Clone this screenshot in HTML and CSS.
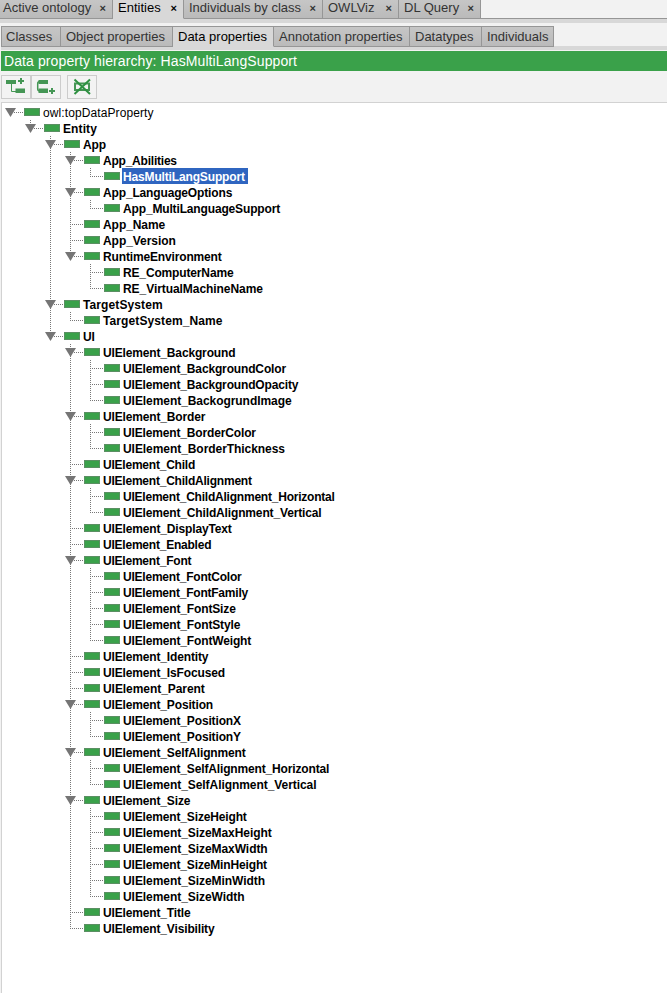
FILE: index.html
```html
<!DOCTYPE html>
<html lang="en">
<head>
<meta charset="utf-8">
<title>Data properties</title>
<link rel="stylesheet" href="styles.css">
</head>
<body>
<nav class="tabs main-tabs">
  <div class="tab t-onto"><span>Active ontology</span><b class="close">×</b></div>
  <div class="tab t-ent selected"><span>Entities</span><b class="close">×</b></div>
  <div class="tab t-ind"><span>Individuals by class</span><b class="close">×</b></div>
  <div class="tab t-viz"><span>OWLViz</span><b class="close">×</b></div>
  <div class="tab t-dl"><span>DL Query</span><b class="close">×</b></div>
</nav>
<nav class="tabs sub-tabs">
  <div class="tab s-cls"><span>Classes</span></div>
  <div class="tab s-obj"><span>Object properties</span></div>
  <div class="tab s-dat selected"><span>Data properties</span></div>
  <div class="tab s-ann"><span>Annotation properties</span></div>
  <div class="tab s-typ"><span>Datatypes</span></div>
  <div class="tab s-idv"><span>Individuals</span></div>
</nav>
<h1 class="title"><span>Data property hierarchy: HasMultiLangSupport</span></h1>
<div class="toolbar">
  <button class="tool" aria-label="Add sub property"><svg width="28" height="22" viewBox="0 0 28 22"><path fill="#459655" d="M4 4h10v4H4zM13.500 12.500H23v4.500h-9.500zM18 2h2v6h-2zM16 4h6v2h-6z"/><path fill="none" stroke="#459655" d="M9.500 8v7.500H14"/></svg></button>
  <button class="tool" aria-label="Add sibling property"><svg width="28" height="22" viewBox="0 0 28 22"><path fill="#459655" d="M6.500 4h9.500v4H6.500zM6.500 12.500h9.500v4.500H6.500zM19 12h2v6h-2zM17 14h6v2h-6z"/><path fill="none" stroke="#459655" stroke-width="1.500" d="M8 5.500Q5.700 5.500 5.700 7.500V13Q5.700 15 8 15"/></svg></button>
  <button class="tool gap" aria-label="Delete property"><svg width="28" height="22" viewBox="0 0 28 22"><path fill="none" stroke="#459655" stroke-width="2" d="M7 7.500h14v6.500H7z"/><path fill="none" stroke="#2f9142" stroke-width="2" d="M6.500 3.500L22 18M22 3.500L6.500 18"/></svg></button>
</div>
<main class="panel">
<ul class="tree root">
<li><div class="row open"><i class="chip"></i><span class="name plain">owl:topDataProperty</span></div>
<ul><li><div class="row open"><i class="chip"></i><span class="name wide">Entity</span></div>
<ul>
<li><div class="row open"><i class="chip"></i><span class="name">App</span></div>
  <ul>
  <li><div class="row open"><i class="chip"></i><span class="name tight">App_Abilities</span></div>
    <ul><li><div class="row"><i class="chip"></i><span class="name active">HasMultiLangSupport</span></div></li></ul></li>
  <li><div class="row open"><i class="chip"></i><span class="name">App_LanguageOptions</span></div>
    <ul><li><div class="row"><i class="chip"></i><span class="name">App_MultiLanguageSupport</span></div></li></ul></li>
  <li><div class="row"><i class="chip"></i><span class="name loose">App_Name</span></div></li>
  <li><div class="row"><i class="chip"></i><span class="name loose">App_Version</span></div></li>
  <li><div class="row open"><i class="chip"></i><span class="name">RuntimeEnvironment</span></div>
    <ul>
    <li><div class="row"><i class="chip"></i><span class="name">RE_ComputerName</span></div></li>
    <li><div class="row"><i class="chip"></i><span class="name loose">RE_VirtualMachineName</span></div></li>
    </ul></li>
  </ul></li>
<li><div class="row open"><i class="chip"></i><span class="name wide">TargetSystem</span></div>
  <ul><li><div class="row"><i class="chip"></i><span class="name wide">TargetSystem_Name</span></div></li></ul></li>
<li><div class="row open"><i class="chip"></i><span class="name">UI</span></div>
  <ul>
  <li><div class="row open"><i class="chip"></i><span class="name">UIElement_Background</span></div>
    <ul>
    <li><div class="row"><i class="chip"></i><span class="name">UIElement_BackgroundColor</span></div></li>
    <li><div class="row"><i class="chip"></i><span class="name">UIElement_BackgroundOpacity</span></div></li>
    <li><div class="row"><i class="chip"></i><span class="name loose">UIElement_BackogrundImage</span></div></li>
    </ul></li>
  <li><div class="row open"><i class="chip"></i><span class="name">UIElement_Border</span></div>
    <ul>
    <li><div class="row"><i class="chip"></i><span class="name">UIElement_BorderColor</span></div></li>
    <li><div class="row"><i class="chip"></i><span class="name loose">UIElement_BorderThickness</span></div></li>
    </ul></li>
  <li><div class="row"><i class="chip"></i><span class="name tight">UIElement_Child</span></div></li>
  <li><div class="row open"><i class="chip"></i><span class="name tight">UIElement_ChildAlignment</span></div>
    <ul>
    <li><div class="row"><i class="chip"></i><span class="name tight">UIElement_ChildAlignment_Horizontal</span></div></li>
    <li><div class="row"><i class="chip"></i><span class="name">UIElement_ChildAlignment_Vertical</span></div></li>
    </ul></li>
  <li><div class="row"><i class="chip"></i><span class="name">UIElement_DisplayText</span></div></li>
  <li><div class="row"><i class="chip"></i><span class="name tight">UIElement_Enabled</span></div></li>
  <li><div class="row open"><i class="chip"></i><span class="name tight">UIElement_Font</span></div>
    <ul>
    <li><div class="row"><i class="chip"></i><span class="name tight">UIElement_FontColor</span></div></li>
    <li><div class="row"><i class="chip"></i><span class="name tight">UIElement_FontFamily</span></div></li>
    <li><div class="row"><i class="chip"></i><span class="name">UIElement_FontSize</span></div></li>
    <li><div class="row"><i class="chip"></i><span class="name">UIElement_FontStyle</span></div></li>
    <li><div class="row"><i class="chip"></i><span class="name">UIElement_FontWeight</span></div></li>
    </ul></li>
  <li><div class="row"><i class="chip"></i><span class="name">UIElement_Identity</span></div></li>
  <li><div class="row"><i class="chip"></i><span class="name">UIElement_IsFocused</span></div></li>
  <li><div class="row"><i class="chip"></i><span class="name loose">UIElement_Parent</span></div></li>
  <li><div class="row open"><i class="chip"></i><span class="name">UIElement_Position</span></div>
    <ul>
    <li><div class="row"><i class="chip"></i><span class="name">UIElement_PositionX</span></div></li>
    <li><div class="row"><i class="chip"></i><span class="name">UIElement_PositionY</span></div></li>
    </ul></li>
  <li><div class="row open"><i class="chip"></i><span class="name">UIElement_SelfAlignment</span></div>
    <ul>
    <li><div class="row"><i class="chip"></i><span class="name">UIElement_SelfAlignment_Horizontal</span></div></li>
    <li><div class="row"><i class="chip"></i><span class="name loose">UIElement_SelfAlignment_Vertical</span></div></li>
    </ul></li>
  <li><div class="row open"><i class="chip"></i><span class="name">UIElement_Size</span></div>
    <ul>
    <li><div class="row"><i class="chip"></i><span class="name">UIElement_SizeHeight</span></div></li>
    <li><div class="row"><i class="chip"></i><span class="name loose">UIElement_SizeMaxHeight</span></div></li>
    <li><div class="row"><i class="chip"></i><span class="name loose">UIElement_SizeMaxWidth</span></div></li>
    <li><div class="row"><i class="chip"></i><span class="name">UIElement_SizeMinHeight</span></div></li>
    <li><div class="row"><i class="chip"></i><span class="name loose">UIElement_SizeMinWidth</span></div></li>
    <li><div class="row"><i class="chip"></i><span class="name loose">UIElement_SizeWidth</span></div></li>
    </ul></li>
  <li><div class="row"><i class="chip"></i><span class="name">UIElement_Title</span></div></li>
  <li><div class="row"><i class="chip"></i><span class="name">UIElement_Visibility</span></div></li>
  </ul></li>
</ul></li></ul></li>
</ul>
</main>
</body>
</html>
```
FILE: styles.css
```css
* { box-sizing: border-box; }
body {
  margin: 0;
  height: 993px;
  display: flex;
  flex-direction: column;
  overflow: hidden;
  background: #f2f2f2;
  font: 12px/16px "Liberation Sans", Arial, sans-serif;
  color: #000;
}
.tabs { display: flex; flex: none; }
.main-tabs { height: 23px; border-bottom: 4px solid #d8d8d8; background: linear-gradient(#969696, #969696) 0 18px / 100% 1px no-repeat; }
.sub-tabs { height: 24px; margin: 3px 0 0 1px; border-bottom: 4px solid #d8d8d8; background: linear-gradient(#969696, #969696) 0 20px / 100% 1px no-repeat; }
.tab {
  display: flex;
  align-items: center;
  flex: none;
  background: linear-gradient(#c6c6c6, #bababa);
  border-right: 1px solid #969696;
  border-bottom: 1px solid #969696;
  color: #333;
  font-size: 13px;
  white-space: nowrap;
}
.main-tabs .tab { height: 19px; padding: 0 6px 2px 5px; justify-content: space-between; }
.sub-tabs .tab { height: 21px; padding-left: 5px; border-top: 1px solid #969696; }
.sub-tabs .tab:first-child { border-left: 1px solid #969696; padding-left: 4px; }
.tab.selected { background: #d8d8d8; border-bottom-color: #d8d8d8; color: #000; }
.close { font-size: 11px; }
.main-tabs .t-onto { width: 113px; padding-left: 3px; }
.t-ent { width: 71px; }
.t-ind { width: 139px; }
.t-viz { width: 76px; }
.t-dl { width: 82px; }
.s-cls { width: 60px; }
.s-obj { width: 112px; }
.s-dat { width: 101px; }
.s-ann { width: 136px; }
.s-typ { width: 72px; }
.s-idv { width: 72px; }
.title {
  flex: none;
  height: 20px;
  margin: 1px 0 0 1px;
  padding-left: 3px;
  background: #3aa14a;
  color: #fff;
  font-size: 14px;
  font-weight: 400;
  line-height: 20px;
  letter-spacing: .1px;
}
.toolbar { flex: none; display: flex; height: 31px; padding: 4px 0 0 1px; }
.tool { width: 30px; height: 24px; padding: 0; border: 1px solid #ccc; background: #f3f3f3; }
.tool svg { display: block; }
.tool.gap { margin-left: 6px; }
.panel { flex: 1; margin-left: 1px; padding-top: 1px; background: #fff; border-top: 1px solid #d2d2d2; border-left: 1px solid #d2d2d2; }
.tree { margin-left: -2px; }
ul { list-style: none; margin: 0; padding: 0; }
ul ul { margin-left: 20px; }
li { position: relative; }
/* vertical guide joining siblings */
ul ul > li::before {
  content: "";
  position: absolute;
  left: 10px;
  top: 0;
  width: 1px;
  height: 100%;
  background: repeating-linear-gradient(#777 0 1px, transparent 1px 2px);
}
ul ul > li:last-child::before { height: 9px; }
.row { position: relative; display: flex; height: 16px; padding-left: 24px; }
.row::before {
  content: "";
  position: absolute;
  left: 10px;
  top: 8px;
  width: 13px;
  height: 1px;
  background: repeating-linear-gradient(90deg, #777 0 1px, transparent 1px 2px);
}
.row.open::after {
  content: "";
  position: absolute;
  left: 5px;
  top: 4px;
  width: 11px;
  height: 9px;
  background: #757575;
  clip-path: polygon(0 0, 100% 0, 50% 100%);
}
.chip { width: 16px; height: 8px; margin: 4px 2px 0 0; background: #3aa14a; border: 1px solid #5b8f63; }
.name { padding: 0 3px 0 1px; line-height: 18px; height: 16px; font-weight: 700; white-space: nowrap; letter-spacing: -.15px; }
.name.tight { letter-spacing: -.22px; }
.name.loose { letter-spacing: -.06px; }
.name.wide { letter-spacing: .1px; }
.name.plain { font-weight: 400; letter-spacing: .1px; }
.name.active { background: #2f65c0; color: #fff; }
```
